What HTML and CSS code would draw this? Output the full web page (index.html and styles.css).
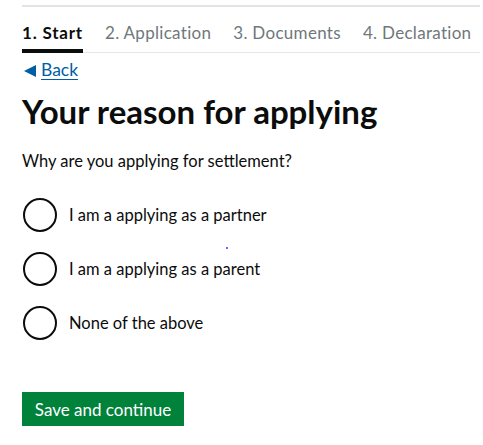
FILE: index.html
```html
<!DOCTYPE html>
<html lang="en">
<head>
  <meta charset="UTF-8" />
  <title>Your reason for applying</title>
  <link rel="stylesheet" href="styles.css">
</head>
<body>
  <div class="page">
    <nav class="steps">
      <span class="step active">1. Start</span>
      <span class="step">2. Application</span>
      <span class="step">3. Documents</span>
      <span class="step">4. Declaration</span>
    </nav>

    <a class="back" href="#"><span class="arrow"></span><span class="back-text">Back</span></a>

    <h1>Your reason for applying</h1>

    <form class="question">
      <p class="hint">Why are you applying for settlement?</p>
      <label class="radio"><input type="radio" name="reason"><span class="circle"></span>I am a applying as a partner</label>
      <label class="radio"><input type="radio" name="reason"><span class="circle"></span>I am a applying as a parent</label>
      <label class="radio"><input type="radio" name="reason"><span class="circle"></span>None of the above</label>
      <button type="button" class="btn">Save and continue</button>
    </form>
    <span class="speck"></span>
  </div>
</body>
</html>
```

FILE: styles.css
```css
* { box-sizing: border-box; margin: 0; padding: 0; }
body {
  font-family: 'Lato', 'Liberation Sans', sans-serif;
  color: #0b0c0c;
  background: #fff;
}
.page {
  position: relative;
  margin: 5px 3px 0 22px;
  border-top: 2px solid #e2e3e4;
}
.steps {
  display: flex;
  gap: 22px;
  padding-top: 15px;
  border-bottom: 1px solid #e6e7e8;
  font-size: 17px;
}
.step {
  color: #6f777b;
  padding-bottom: 6px;
  border-bottom: 4px solid transparent;
  margin-bottom: -1px;
  letter-spacing: 0.3px;
}
.step.active {
  color: #0b0c0c;
  font-weight: 700;
  letter-spacing: 0.8px;
  border-bottom-color: #0b0c0c;
}
.back {
  display: inline-flex;
  align-items: center;
  margin-top: 7px;
  color: #005ea5;
  text-decoration: none;
  font-size: 17.5px;
}
.arrow {
  width: 0;
  height: 0;
  margin: 1px 5px 0 2px;
  border-top: 6px solid transparent;
  border-bottom: 6px solid transparent;
  border-right: 12px solid #005ea5;
}
.back-text {
  border-bottom: 1px solid #005ea5;
  line-height: 19px;
}
h1 {
  font-size: 33px;
  font-weight: 700;
  line-height: 38px;
  margin-top: 12px;
  letter-spacing: 0;
}
.hint {
  font-size: 16.5px;
  line-height: 22px;
  margin: 20px 0 25px;
}
.radio {
  display: flex;
  align-items: center;
  gap: 12px;
  height: 36px;
  margin-bottom: 18px;
  font-size: 16.5px;
}
.radio input { display: none; }
.circle {
  width: 34px;
  height: 34px;
  margin-left: 1px;
  border: 2px solid #0b0c0c;
  border-radius: 50%;
}
.btn {
  margin-top: 33px;
  font-family: inherit;
  font-size: 17px;
  color: #fff;
  background: #00823b;
  border: none;
  box-shadow: 0 2px 0 #003618;
  height: 34px;
  width: 162px;
  white-space: nowrap;
  text-align: center;
}
.speck {
  position: absolute;
  left: 204px;
  top: 240px;
  width: 2px;
  height: 2px;
  background: #6a6aff;
}
```
